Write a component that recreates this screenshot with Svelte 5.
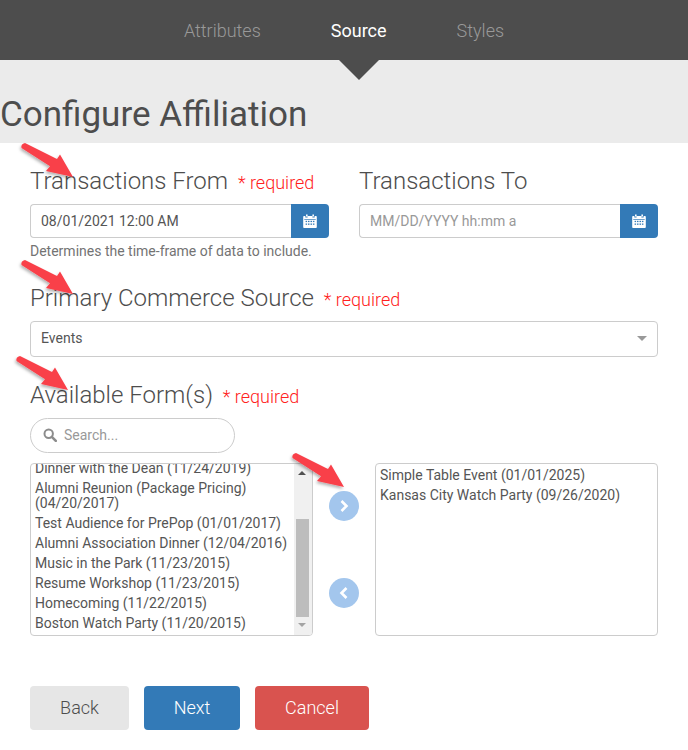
<script>
  const tabs = [
    { name: "Attributes", active: false },
    { name: "Source", active: true },
    { name: "Styles", active: false }
  ];

  const available = [
    "Dinner with the Dean (11/24/2019)",
    "Alumni Reunion (Package Pricing) (04/20/2017)",
    "Test Audience for PrePop (01/01/2017)",
    "Alumni Association Dinner (12/04/2016)",
    "Music in the Park (11/23/2015)",
    "Resume Workshop (11/23/2015)",
    "Homecoming (11/22/2015)",
    "Boston Watch Party (11/20/2015)"
  ];

  const selected = ["Simple Table Event (01/01/2025)", "Kansas City Watch Party (09/26/2020)"];

  // annotation arrows: where the tail starts on the page
  const arrows = [
    { x: 22, y: 144 },
    { x: 22, y: 261 },
    { x: 17, y: 357 },
    { x: 293, y: 454 }
  ];
</script>

{#snippet calendar()}
  <svg class="cal" viewBox="0 0 14 14" width="14" height="14" aria-hidden="true">
    <path fill="#fff" d="M3 0.5h1.6v2H3zM9.4 0.5H11v2H9.4zM1 2h1.4v1.6h2.2V2h4.8v1.6h2.2V2H13a.8.8 0 0 1 .8.8V13a.9.9 0 0 1-.8.9H1a.9.9 0 0 1-.8-.9V2.800A.8.8 0 0 1 1 2z" />
    <g fill="#337ab7">
      <rect x="1.300" y="5" width="11.400" height="0.7" />
      <rect x="2.600" y="6.800" width="1.500" height="1.300" /><rect x="5" y="6.800" width="1.500" height="1.300" /><rect x="7.500" y="6.800" width="1.500" height="1.300" /><rect x="9.900" y="6.800" width="1.500" height="1.300" />
      <rect x="2.600" y="9.500" width="1.500" height="1.300" /><rect x="5" y="9.500" width="1.500" height="1.300" /><rect x="7.500" y="9.500" width="1.500" height="1.300" /><rect x="9.900" y="9.500" width="1.500" height="1.300" />
    </g>
  </svg>
{/snippet}

<div class="page">
  <nav class="tabs">
    {#each tabs as tab}
      <span class="tab" class:active={tab.active}>{tab.name}</span>
    {/each}
    <span class="caret"></span>
  </nav>

  <header class="band">
    <h1>Configure Affiliation</h1>
  </header>

  <main class="form">
    <div class="dates">
      <div class="field">
        <div class="label">Transactions From <em>* required</em></div>
        <div class="group">
          <div class="input">08/01/2021 12:00 AM</div>
          <button class="cal-btn">{@render calendar()}</button>
        </div>
        <p class="help">Determines the time-frame of data to include.</p>
      </div>
      <div class="field">
        <div class="label">Transactions To</div>
        <div class="group">
          <div class="input placeholder">MM/DD/YYYY hh:mm a</div>
          <button class="cal-btn">{@render calendar()}</button>
        </div>
      </div>
    </div>

    <div class="label source">Primary Commerce Source <em>* required</em></div>
    <div class="select">
      <span>Events</span>
      <i class="down"></i>
    </div>

    <div class="label forms">Available Form(s) <em>* required</em></div>
    <div class="search">
      <svg viewBox="0 0 14 14" width="14" height="14" aria-hidden="true">
        <circle cx="5.700" cy="5.700" r="4.200" fill="none" stroke="#8c8c8c" stroke-width="2" />
        <path d="M8.800 8.800l4 4" stroke="#8c8c8c" stroke-width="2.600" stroke-linecap="round" />
      </svg>
      <span>Search...</span>
    </div>

    <div class="picker">
      <div class="list left">
        <ul>
          {#each available as item}
            <li>{item}</li>
          {/each}
        </ul>
        <div class="scrollbar">
          <i class="sb-up"></i>
          <b class="thumb"></b>
          <i class="sb-down"></i>
        </div>
      </div>

      <div class="moves">
        <button class="move">
          <svg viewBox="0 0 10 14" width="10" height="14" aria-hidden="true"><path d="M2.500 2l5 5-5 5" fill="none" stroke="#fff" stroke-width="2.600" /></svg>
        </button>
        <button class="move">
          <svg viewBox="0 0 10 14" width="10" height="14" aria-hidden="true"><path d="M7.500 2l-5 5 5 5" fill="none" stroke="#fff" stroke-width="2.600" /></svg>
        </button>
      </div>

      <div class="list right">
        <ul>
          {#each selected as item}
            <li>{item}</li>
          {/each}
        </ul>
      </div>
    </div>

    <div class="actions">
      <button class="btn back">Back</button>
      <button class="btn next">Next</button>
      <button class="btn cancel">Cancel</button>
    </div>
  </main>

  {#each arrows as a}
    <svg class="arrow" style="left: {a.x}px; top: {a.y}px" viewBox="0 0 54 36" width="54" height="36" aria-hidden="true">
      <defs>
        <filter id="sh" x="-20%" y="-20%" width="150%" height="150%">
          <feDropShadow dx="-1" dy="2" stdDeviation="1.500" flood-color="#000" flood-opacity="0.3" />
        </filter>
      </defs>
      <path filter="url(#sh)" fill="#f9404a" d="M3 -1 L35 15 L38 10.500 L51 33 L24 27 L28 22.300 L-0.500 4 Q-1.500 0 3 -1 Z" />
    </svg>
  {/each}
</div>

<style>
  :global(body) {
    margin: 0;
    background: #fff;
  }

  .page {
    position: relative;
    width: 688px;
    height: 750px;
    overflow: hidden;
    font-family: Roboto, "Liberation Sans", sans-serif;
    color: #4d4d4d;
  }

  .tabs {
    position: relative;
    height: 60px;
    background: #4d4d4d;
    display: flex;
    justify-content: center;
    align-items: center;
    gap: 70px;
  }

  .tab {
    font-size: 18px;
    font-weight: 300;
    color: #999;
  }

  .tab.active {
    color: #fff;
    font-weight: 400;
  }

  .caret {
    position: absolute;
    left: 339px;
    top: 60px;
    border-left: 20px solid transparent;
    border-right: 20px solid transparent;
    border-top: 20px solid #4d4d4d;
  }

  .band {
    height: 83px;
    background: #ebebeb;
    display: flex;
    align-items: flex-end;
  }

  h1 {
    margin: 0 0 8px;
    font-size: 35px;
    font-weight: 400;
    line-height: 40px;
    color: #4d4d4d;
  }

  .form {
    padding: 21px 30px 0;
  }

  .dates {
    display: grid;
    grid-template-columns: 299px 299px;
    gap: 30px;
  }

  .label {
    height: 34px;
    font-size: 24px;
    font-weight: 300;
    line-height: 34px;
    color: #4d4d4d;
    white-space: nowrap;
  }

  .label em {
    font-style: normal;
    font-size: 18px;
    font-weight: 300;
    color: #ff2020;
    margin-left: 4px;
  }

  .group {
    display: flex;
    height: 34px;
    margin-top: 6px;
  }

  .input {
    flex: 1;
    box-sizing: border-box;
    border: 1px solid #ccc;
    border-right: 0;
    border-radius: 4px 0 0 4px;
    padding: 0 10px;
    font-size: 14px;
    line-height: 32px;
    color: #555;
  }

  .placeholder {
    color: #999;
  }

  .cal-btn {
    width: 38px;
    padding: 0;
    border: 0;
    background: #337ab7;
    border-radius: 0 4px 4px 0;
    display: flex;
    align-items: center;
    justify-content: center;
  }

  .help {
    margin: 5px 0 0;
    font-size: 14px;
    line-height: 17px;
    color: #737373;
  }

  .source {
    margin-top: 21px;
  }

  .select {
    box-sizing: border-box;
    height: 36px;
    margin-top: 6px;
    border: 1px solid #ccc;
    border-radius: 4px;
    padding: 0 10px 2px;
    display: flex;
    align-items: center;
    justify-content: space-between;
    font-size: 14px;
    color: #555;
  }

  .down {
    border-left: 5px solid transparent;
    border-right: 5px solid transparent;
    border-top: 5px solid #999;
  }

  .forms {
    margin-top: 21px;
  }

  .search {
    box-sizing: border-box;
    width: 205px;
    height: 35px;
    margin-top: 6px;
    border: 1px solid #ccc;
    border-radius: 18px;
    padding: 0 0 2px 12px;
    display: flex;
    align-items: center;
    gap: 7px;
    font-size: 14px;
    color: #999;
  }

  .picker {
    display: flex;
    margin-top: 10px;
    height: 173px;
  }

  .list {
    box-sizing: border-box;
    width: 283px;
    height: 173px;
    border: 1px solid #ccc;
    border-radius: 4px;
    overflow: hidden;
    display: flex;
    font-size: 14px;
    line-height: 20px;
    color: #555;
  }

  ul {
    list-style: none;
    margin: 0;
    padding: 0;
    flex: 1;
    min-width: 0;
  }

  li {
    padding: 0 4px;
  }

  .left ul {
    margin-top: -6px;
  }

  .left li:nth-child(2) {
    line-height: 15px;
    padding: 3px 4px 2px;
  }

  .right ul {
    padding: 1px 0 0;
  }

  .scrollbar {
    box-sizing: border-box;
    width: 18px;
    background: #f0f0f0;
    display: flex;
    flex-direction: column;
    align-items: center;
    padding: 7px 2px 0 0;
  }

  .sb-up {
    border-left: 4px solid transparent;
    border-right: 4px solid transparent;
    border-bottom: 4px solid #505050;
  }

  .thumb {
    width: 13px;
    height: 98px;
    background: #bdbdbd;
    margin-top: 44px;
  }

  .sb-down {
    margin-top: 6px;
    border-left: 4px solid transparent;
    border-right: 4px solid transparent;
    border-top: 4px solid #a3a3a3;
  }

  .moves {
    width: 62px;
    display: flex;
    flex-direction: column;
    align-items: center;
    padding-top: 28px;
    gap: 57px;
  }

  .move {
    width: 30px;
    height: 30px;
    padding: 0;
    border: 0;
    border-radius: 50%;
    background: #a3c6ed;
    display: flex;
    align-items: center;
    justify-content: center;
  }

  .actions {
    display: flex;
    gap: 15px;
    margin-top: 50px;
  }

  .btn {
    height: 44px;
    padding: 0 0 2px;
    border: 0;
    border-radius: 4px;
    font-family: inherit;
    font-size: 18px;
    font-weight: 300;
    color: #fff;
  }

  .back {
    width: 99px;
    background: #e6e6e6;
    color: #4d4d4d;
  }

  .next {
    width: 96px;
    background: #337ab7;
  }

  .cancel {
    width: 114px;
    background: #d9534f;
  }

  .arrow {
    position: absolute;
    overflow: visible;
  }
</style>
